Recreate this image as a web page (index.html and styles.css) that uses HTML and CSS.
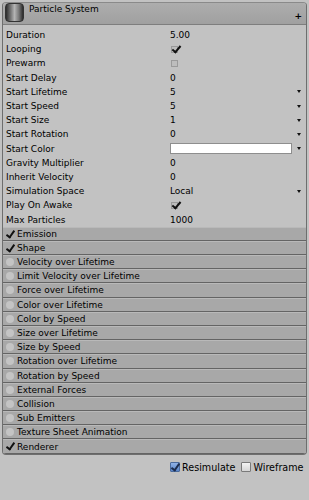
FILE: index.html
```html
<!DOCTYPE html>
<html lang="en">
<head>
	<meta charset="UTF-8" />
	<title>Particle System</title>
	<link rel="stylesheet" href="styles.css">
</head>
<body>
	<div class="panel">
		<div class="header">
			<span class="compIcon"></span>
			<span class="title">Particle System</span>
			<span class="plus">+</span>
		</div>
		<ul class="props">
			<li><span class="label">Duration</span><span class="value">5.00</span></li>
			<li><span class="label">Looping</span><span class="value"><i class="toggle on"></i></span></li>
			<li><span class="label">Prewarm</span><span class="value"><i class="toggle"></i></span></li>
			<li><span class="label">Start Delay</span><span class="value">0</span></li>
			<li><span class="label">Start Lifetime</span><span class="value">5</span><b class="arrow"></b></li>
			<li><span class="label">Start Speed</span><span class="value">5</span><b class="arrow"></b></li>
			<li><span class="label">Start Size</span><span class="value">1</span><b class="arrow"></b></li>
			<li><span class="label">Start Rotation</span><span class="value">0</span><b class="arrow"></b></li>
			<li><span class="label">Start Color</span><span class="value"><span class="colorField"></span></span><b class="arrow"></b></li>
			<li><span class="label">Gravity Multiplier</span><span class="value">0</span></li>
			<li><span class="label">Inherit Velocity</span><span class="value">0</span></li>
			<li><span class="label">Simulation Space</span><span class="value">Local</span><b class="arrow"></b></li>
			<li><span class="label">Play On Awake</span><span class="value"><i class="toggle on"></i></span></li>
			<li><span class="label">Max Particles</span><span class="value">1000</span></li>
		</ul>
		<ul class="modules">
			<li><span class="mark check"></span>Emission</li>
			<li><span class="mark check"></span>Shape</li>
			<li><span class="mark dot"></span>Velocity over Lifetime</li>
			<li><span class="mark dot"></span>Limit Velocity over Lifetime</li>
			<li><span class="mark dot"></span>Force over Lifetime</li>
			<li><span class="mark dot"></span>Color over Lifetime</li>
			<li><span class="mark dot"></span>Color by Speed</li>
			<li><span class="mark dot"></span>Size over Lifetime</li>
			<li><span class="mark dot"></span>Size by Speed</li>
			<li><span class="mark dot"></span>Rotation over Lifetime</li>
			<li><span class="mark dot"></span>Rotation by Speed</li>
			<li><span class="mark dot"></span>External Forces</li>
			<li><span class="mark dot"></span>Collision</li>
			<li><span class="mark dot"></span>Sub Emitters</li>
			<li><span class="mark dot"></span>Texture Sheet Animation</li>
			<li><span class="mark check"></span>Renderer</li>
		</ul>
	</div>
	<div class="footer">
		<label class="opt"><i class="box on"></i>Resimulate</label>
		<label class="opt"><i class="box"></i>Wireframe</label>
	</div>
</body>
</html>
```

FILE: styles.css
```css
*{
	margin: 0;padding: 0;
	box-sizing: border-box;
}
body{
	background: #c2c2c2;
	font-family: "DejaVu Sans", Verdana, sans-serif;
	font-size: 9px;
	color: #000;
}
ul{
	list-style-type: none;
}

/* component frame */
.panel{
	width: 305px;
	margin: 2px 0 0 2px;
	border: 1px solid #6e6e6e;
	border-top-color: #8a8a8a;
	border-radius: 4px;
	overflow: hidden;
}
.header{
	display: flex;
	align-items: flex-start;
	height: 22px;
	background: linear-gradient(#adadad, #a0a0a0);
	border-bottom: 1px solid #7e7e7e;
}
.compIcon{
	width: 19px;height: 19px;
	margin: 0 5px 0 2px;
	border: 1px solid #333;
	border-radius: 4px;
	background: linear-gradient(to right, #2b2b2b, #6e6e6e 25%, #b4b4b4 50%, #7a7a7a 75%, #2b2b2b);
}
.title{
	line-height: 12px;
}
.plus{
	margin-left: auto;
	margin-right: 4px;
	align-self: flex-end;
	font-weight: bold;
	font-size: 9px;
	line-height: 9px;
	margin-bottom: 3px;
}

/* properties */
.props{
	padding-top: 3px;
}
.props li{
	display: flex;
	align-items: center;
	height: 14.2px;
}
.label{
	width: 167px;
	padding-left: 3px;
}
.value{
	flex: 1;
	display: flex;
	align-items: center;
}
.arrow{
	width: 14px;
	display: flex;
	justify-content: center;
}
.arrow::before{
	content: "";
	border-left: 2px solid transparent;
	border-right: 2px solid transparent;
	border-top: 3px solid #111;
}
.colorField{
	display: block;
	width: 122px;height: 11px;
	background: #fff;
	border: 1px solid #8e8e8e;
}
.toggle{
	position: relative;
	display: block;
	width: 7px;height: 7px;
	margin-left: 1px;
	background: #bdbdbd;
	border: 1px solid #9a9a9a;
}
.toggle.on::after{
	content: "";
	position: absolute;
	left: 2px;top: -3px;
	width: 3px;height: 7px;
	border-right: 2px solid #111;
	border-bottom: 2px solid #111;
	transform: rotate(40deg);
}

/* module list */
.modules li{
	display: flex;
	align-items: center;
	height: 14.2px;
	background: #a8a8a8;
	border-top: 1px solid #b9b9b9;
	border-bottom: 1px solid #646464;
}
.mark{
	position: relative;
	width: 14px;height: 100%;
	flex: none;
}
.mark.dot::after{
	content: "";
	position: absolute;
	left: 3px;top: 2px;
	width: 8px;height: 8px;
	border-radius: 50%;
	background: #c4c4c4;
}
.mark.check::after{
	content: "";
	position: absolute;
	left: 5px;top: 1px;
	width: 3px;height: 7px;
	border-right: 2px solid #111;
	border-bottom: 2px solid #111;
	transform: rotate(35deg);
}

/* scene view options */
.footer{
	display: flex;
	align-items: center;
	gap: 6px;
	padding: 7px 0 0 170px;
	font-size: 9.6px;
	white-space: nowrap;
}
.opt{
	display: flex;
	align-items: center;
	gap: 2px;
}
.box{
	position: relative;
	display: block;
	width: 10px;height: 10px;
	border: 1px solid #7a7a7a;
	border-radius: 1px;
	background: linear-gradient(#f4f4f4, #d6d6d6);
}
.box.on{
	background: linear-gradient(#8fb2e6, #5b86c8);
	border-color: #4a6a9c;
}
.box.on::after{
	content: "";
	position: absolute;
	left: 2px;top: -1px;
	width: 3px;height: 7px;
	border-right: 2px solid #1c2c4c;
	border-bottom: 2px solid #1c2c4c;
	transform: rotate(35deg);
}
```
